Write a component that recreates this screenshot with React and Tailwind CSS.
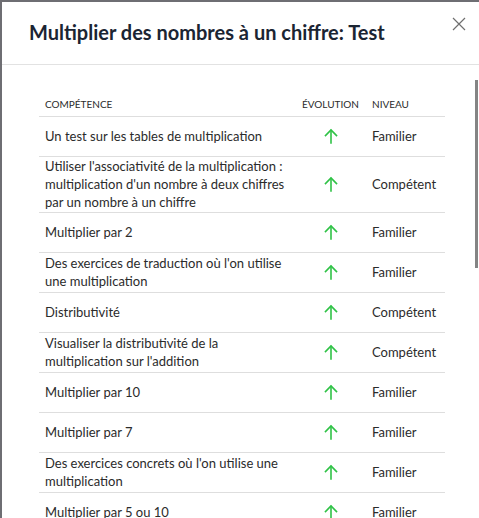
import React from "react";

const rows = [
  ["Un test sur les tables de multiplication", "Familier"],
  ["Utiliser l'associativité de la multiplication : multiplication d'un nombre à deux chiffres par un nombre à un chiffre", "Compétent"],
  ["Multiplier par 2", "Familier"],
  ["Des exercices de traduction où l'on utilise une multiplication", "Familier"],
  ["Distributivité", "Compétent"],
  ["Visualiser la distributivité de la multiplication sur l'addition", "Compétent"],
  ["Multiplier par 10", "Familier"],
  ["Multiplier par 7", "Familier"],
  ["Des exercices concrets où l'on utilise une multiplication", "Familier"],
  ["Multiplier par 5 ou 10", "Familier"],
  ["Multiplier par 3", "Familier"],
];

function Arrow() {
  return (
    <svg width="14" height="16" viewBox="0 0 14 16" fill="none" stroke="#2fc246" strokeWidth="1.6" strokeLinecap="square">
      <path d="M7 2.5V15" />
      <path d="M1.5 7.5L7 2L12.5 7.5" />
    </svg>
  );
}

export default function App() {
  return (
    <div className="w-[479px] h-[518px] overflow-hidden bg-[#6e6e73] pl-[2px] pt-[2px]" style={{ fontFamily: "Lato, 'Noto Sans', sans-serif" }}>
      <div className="bg-white w-full h-full relative flex flex-col">
        <div className="h-[63px] border-b border-[#e2e2e2] flex items-center pl-[27px] shrink-0">
          <h1 className="text-[20px] font-bold text-[#1b2533] leading-none pb-[2px]">Multiplier des nombres à un chiffre: Test</h1>
          <svg className="absolute left-[450px] top-[15px]" width="14" height="14" viewBox="0 0 14 14" stroke="#6f6f6f" strokeWidth="1.2">
            <path d="M1 1L13 13M13 1L1 13" />
          </svg>
        </div>
        <div className="absolute left-[473px] top-[78px] w-[3px] h-[188px] bg-[#848484]" />
        <div className="pl-[37px] pr-[32px] pt-[31px] overflow-hidden">
          <table className="w-[406px] border-collapse text-[#2b2b2b] table-fixed">
            <colgroup>
              <col className="w-[257px]" />
              <col className="w-[70px]" />
              <col className="w-[79px]" />
            </colgroup>
            <thead>
              <tr className="border-b border-[#dedede]">
                <th className="text-left font-normal text-[10px] uppercase px-[6px] h-[20px] align-top leading-[14px] pt-[1px]">Compétence</th>
                <th className="text-left font-normal text-[10px] uppercase px-[6px] align-top leading-[14px] pt-[1px]">Évolution</th>
                <th className="text-left font-normal text-[10px] uppercase px-[6px] align-top leading-[14px] pt-[1px]">Niveau</th>
              </tr>
            </thead>
            <tbody>
              {rows.map(([name, level], i) => (
                <tr key={i} className="border-b border-[#dedede]">
                  <td className="px-[6px] pt-0 pb-px h-[40px] text-[13px] leading-[18px] align-middle">{name}</td>
                  <td className="pt-0 pb-px align-middle">
                    <div className="flex justify-center pt-[1px]"><Arrow /></div>
                  </td>
                  <td className="px-[6px] pt-0 pb-px text-[13px] leading-[18px] align-middle">{level}</td>
                </tr>
              ))}
            </tbody>
          </table>
        </div>
      </div>
    </div>
  );
}
